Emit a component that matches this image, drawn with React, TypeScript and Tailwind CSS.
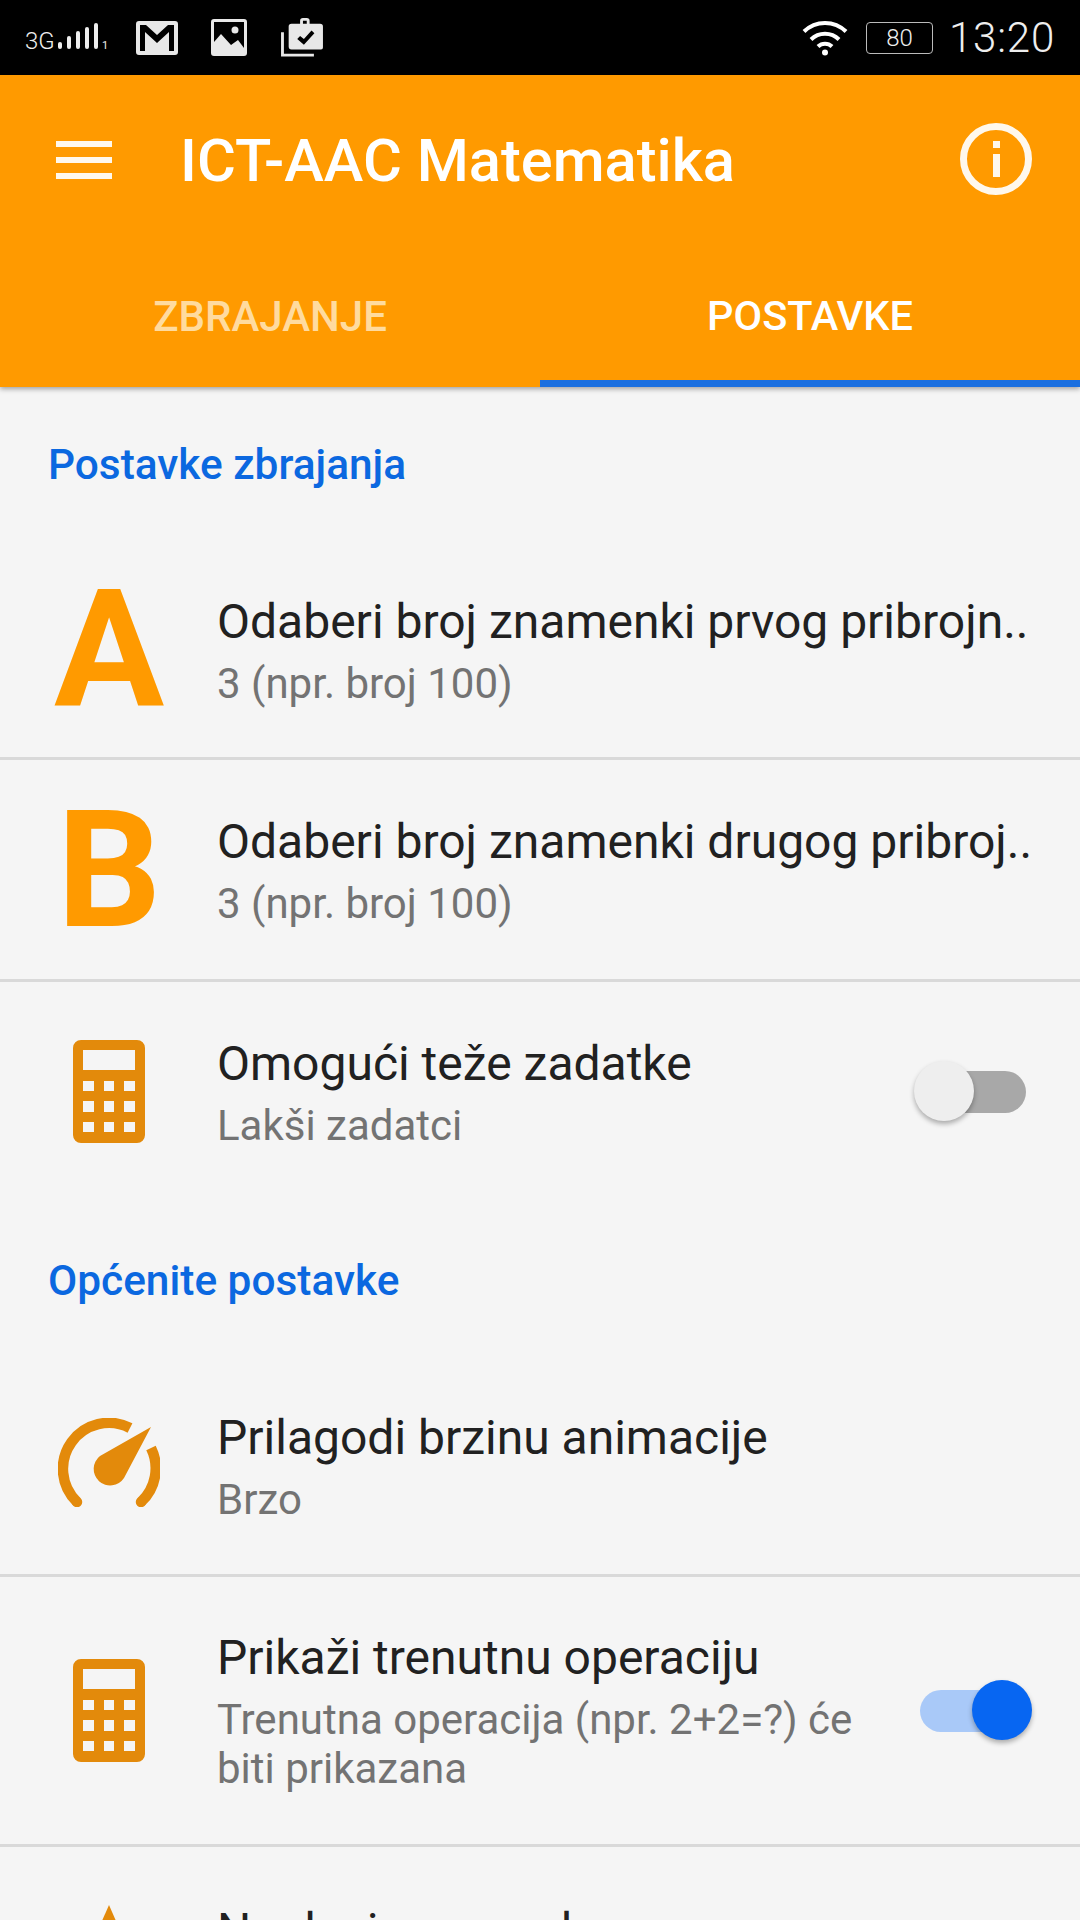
const ICON = "#e38a0b";

function Calculator() {
  return (
    <svg width="72" height="103" viewBox="0 0 72 103">
      <path
        fillRule="evenodd"
        fill={ICON}
        d="M8 0h56a8 8 0 0 1 8 8v87a8 8 0 0 1-8 8H8a8 8 0 0 1-8-8V8a8 8 0 0 1 8-8zM10 10v20h52V10zM10 41v10h11V41zM31 41v10h10V41zM51 41v10h11V41zM10 61v11h11V61zM31 61v11h10V61zM51 61v11h11V61zM10 82v10h11V82zM31 82v10h10V82zM51 82v10h11V82z"
      />
    </svg>
  );
}

function Gauge() {
  return (
    <svg width="102" height="89" viewBox="0 0 102 89" className="mb-[7px]">
      <path d="M19 84A46 46 0 0 1 72 10" fill="none" stroke={ICON} strokeWidth="10.5" />
      <path d="M93 30A46 46 0 0 1 83 84" fill="none" stroke={ICON} strokeWidth="10.5" />
      <circle cx="19" cy="84" r="5.25" fill={ICON} />
      <circle cx="83" cy="84" r="5.25" fill={ICON} />
      <path d="M93 9L42 38A16.5 16.5 0 1 0 66 60Z" fill={ICON} />
    </svg>
  );
}

function Toggle({ on }: { on: boolean }) {
  return (
    <div className={`relative h-[42px] w-[106px] rounded-full ${on ? "bg-[#a9c9f8]" : "bg-[#a8a8a8]"}`}>
      <div
        className={`absolute top-[-10px] h-[60px] w-[60px] rounded-full shadow-[0_3px_5px_rgba(0,0,0,0.3)] ${
          on ? "right-[-6px] bg-[#0766f2]" : "left-[-6px] bg-[#eeeeee]"
        }`}
      />
    </div>
  );
}

function Row({
  icon,
  title,
  sub,
  right,
  height,
  divider = true,
}: {
  icon: React.ReactNode;
  title: string;
  sub: string;
  right?: React.ReactNode;
  height: string;
  divider?: boolean;
}) {
  return (
    <div className={`flex items-center ${height} ${divider ? "border-b-[3px] border-[#d9d9d9]" : ""}`}>
      <div className="flex w-[217px] shrink-0 justify-center pl-[1px]">{icon}</div>
      <div className="min-w-0 flex-1 pr-[30px]">
        <div className="text-[48px] leading-[60px] whitespace-nowrap text-[#212121]">{title}</div>
        <div className="mt-[7px] text-[42px] leading-[49px] text-[#737373]">{sub}</div>
      </div>
      {right && <div className="mr-[54px] shrink-0">{right}</div>}
    </div>
  );
}

export default function App() {
  return (
    <div className="h-[1920px] w-[1080px] overflow-hidden bg-[#f5f5f5] font-['Roboto',sans-serif]">
      <div className="flex h-[75px] items-center justify-between bg-black px-[25px] text-[#eeeeee]">
        <div className="flex items-center">
          <svg width="84" height="34" viewBox="0 0 84 34" className="mr-[27px]">
            <text x="0" y="28" fontSize="24" fill="#eee" fontFamily="Roboto" fontWeight="300">3G</text>
            <rect x="33" y="21" width="4" height="7" rx="2" fill="#eee" />
            <rect x="42" y="15" width="4" height="13" rx="2" fill="#eee" />
            <rect x="51" y="10" width="4" height="18" rx="2" fill="#eee" />
            <rect x="60" y="6" width="4" height="22" rx="2" fill="#eee" />
            <rect x="69" y="2" width="4" height="26" rx="2" fill="#eee" />
            <text x="77" y="28" fontSize="11" fill="#eee" fontFamily="Roboto">1</text>
          </svg>
          <svg width="42" height="34" viewBox="0 0 42 34" className="mr-[33px]">
            <path
              fillRule="evenodd"
              fill="#e8e8e8"
              d="M3 0h36a3 3 0 0 1 3 3v28a3 3 0 0 1-3 3H3a3 3 0 0 1-3-3V3a3 3 0 0 1 3-3zM4 4v26h5V11l12 11 12-11v19h5V4h-6L21 14 10 4z"
            />
          </svg>
          <svg width="36" height="37" viewBox="0 0 36 37" className="mr-[33px]">
            <path
              fillRule="evenodd"
              fill="#e8e8e8"
              d="M3 0h30a3 3 0 0 1 3 3v31a3 3 0 0 1-3 3H3a3 3 0 0 1-3-3V3a3 3 0 0 1 3-3zM3 3v20l7-8 10 11 7-5 6 8V3zM20.500 11a3.500 3.500 0 1 0 7 0 3.500 3.500 0 0 0-7 0z"
            />
          </svg>
          <svg width="44" height="40" viewBox="0 0 44 42">
            <path d="M1.500 15v24h33" fill="none" stroke="#e8e8e8" strokeWidth="3" />
            <path
              fillRule="evenodd"
              fill="#e8e8e8"
              d="M11 6h9V3a3 3 0 0 1 3-3h4a3 3 0 0 1 3 3v3h11a3 3 0 0 1 3 3v22a2 2 0 0 1-2 2H11a3 3 0 0 1-3-3V9a3 3 0 0 1 3-3zM23 3v3h4V3zM20 19l-3 3 7 6 11-12-3-3-8 9z"
            />
          </svg>
        </div>
        <div className="flex items-center">
          <svg width="46" height="37" viewBox="0 0 46 36" className="mr-[18px]">
            <path d="M2 12a30 30 0 0 1 42 0M9 20a20 20 0 0 1 28 0M16 27a10 10 0 0 1 14 0" fill="none" stroke="#fff" strokeWidth="4" />
            <circle cx="23" cy="33" r="3" fill="#fff" />
          </svg>
          <div className="mr-[16px] flex h-[32px] w-[67px] items-center justify-center rounded-[4px] border-[1.5px] border-[#bbbbbb] text-[24px] leading-none font-light">
            80
          </div>
          <div className="text-[42px] leading-none font-light tracking-[0.8px]">13:20</div>
        </div>
      </div>
      <div className="relative z-10 h-[312px] bg-[#ff9a00] shadow-[0_2px_5px_rgba(0,0,0,0.35)]">
        <div className="flex h-[170px] items-center pr-[48px] pl-[56px]">
          <div className="mr-[68px] flex w-[56px] flex-col gap-[10px]">
            <div className="h-[6px] bg-[#fff8ec]" />
            <div className="h-[6px] bg-[#fff8ec]" />
            <div className="h-[6px] bg-[#fff8ec]" />
          </div>
          <div className="flex-1 pt-[4px] text-[59.6px] font-medium text-white">ICT-AAC Matematika</div>
          <svg width="72" height="72" viewBox="0 0 72 72" className="mb-[2px]">
            <circle cx="36" cy="36" r="32.500" fill="none" stroke="#fff8ec" strokeWidth="7" />
            <rect x="33" y="31" width="7" height="23" fill="#fff8ec" />
            <rect x="33" y="18" width="7" height="7" fill="#fff8ec" />
          </svg>
        </div>
        <div className="flex h-[142px]">
          <div className="flex w-[540px] items-center justify-center text-[42px] font-medium text-[#ffdb9f]">
            ZBRAJANJE
          </div>
          <div className="flex w-[540px] items-center justify-center border-b-[7px] border-[#1a6fe0] pt-[7px] text-[41.5px] font-medium text-white">
            POSTAVKE
          </div>
        </div>
      </div>
      <div className="flex h-[156px] items-center pl-[48px] text-[42.4px] font-medium text-[#0b68e0]">Postavke zbrajanja</div>
      <Row
        height="h-[217px]"
        icon={<div className="text-[164px] leading-none font-bold text-[#ff9a00]">A</div>}
        title="Odaberi broj znamenki prvog pribrojn.."
        sub="3 (npr. broj 100)"
      />
      <Row
        height="h-[222px]"
        icon={<div className="text-[164px] leading-none font-bold text-[#ff9a00]">B</div>}
        title="Odaberi broj znamenki drugog pribroj.."
        sub="3 (npr. broj 100)"
      />
      <Row height="h-[219px]" divider={false} icon={<Calculator />} title="Omogući teže zadatke" sub="Lakši zadatci" right={<Toggle on={false} />} />
      <div className="flex h-[160px] items-center pl-[48px] text-[42.4px] font-medium text-[#0b68e0]">Općenite postavke</div>
      <Row height="h-[216px] pb-[4px]" icon={<Gauge />} title="Prilagodi brzinu animacije" sub="Brzo" />
      <Row
        height="h-[270px]"
        icon={<Calculator />}
        title="Prikaži trenutnu operaciju"
        sub="Trenutna operacija (npr. 2+2=?) će biti prikazana"
        right={<Toggle on />}
      />
      <div className="flex h-[73px] overflow-hidden">
        <div className="flex w-[217px] shrink-0 justify-center pt-[58px] pl-[1px]">
          <svg width="44" height="50" viewBox="0 0 44 50">
            <path d="M22 0L44 50H0z" fill={ICON} />
          </svg>
        </div>
        <div className="pt-[54px] text-[48px] leading-[60px] whitespace-nowrap text-[#212121]">Naglasi znamenke</div>
      </div>
    </div>
  );
}
